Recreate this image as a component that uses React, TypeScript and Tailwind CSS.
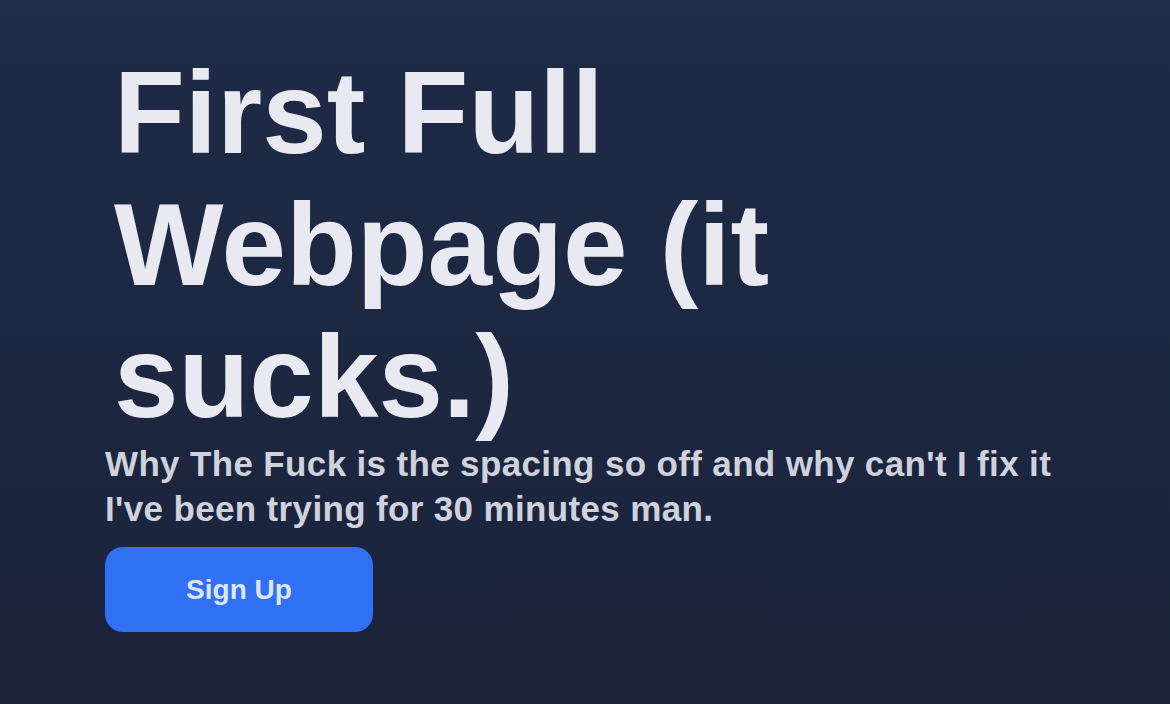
export default function App() {
  return (
    <div className="w-[1170px] h-[704px] overflow-hidden bg-gradient-to-b from-[#1f2b47] to-[#1a233a] pl-[105px] pt-[47px]" style={{ fontFamily: '"Liberation Sans", Arial, sans-serif' }}>
      <h1 className="ml-[9px] w-[760px] text-[116px] leading-[132px] font-bold text-[#e9e9f1]">
        First Full Webpage (it sucks.)
      </h1>
      <p className="-mt-[2px] w-[975px] text-[35px] leading-[45px] font-bold text-[#cfd1dc] tracking-[0.35px]">
        Why The Fuck is the spacing so off and why can't I fix it I've been trying for 30 minutes man.
      </p>
      <button className="mt-[16px] w-[268px] h-[85px] rounded-[18px] bg-[#3070f2] text-[28px] font-bold text-[#dde6f8]">
        Sign Up
      </button>
    </div>
  );
}
